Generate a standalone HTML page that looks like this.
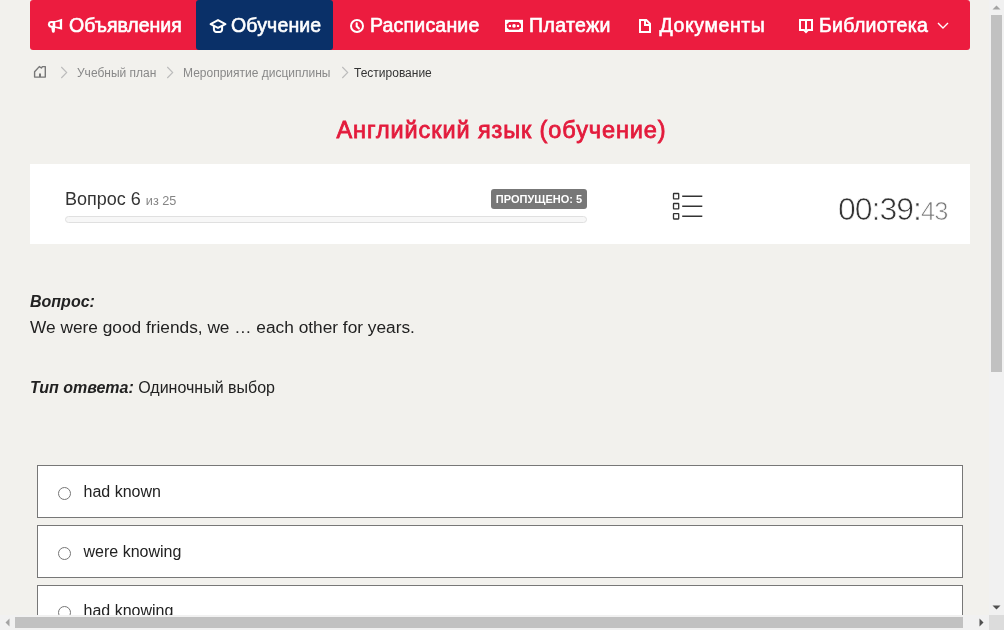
<!DOCTYPE html>
<html><head><meta charset="utf-8">
<style>
*{margin:0;padding:0;box-sizing:border-box}
body{will-change:transform}
html,body{width:1004px;height:630px;overflow:hidden;background:#f2f1ed;font-family:"Liberation Sans",sans-serif;position:relative}
.a{position:absolute;white-space:nowrap}
.nav{left:30px;top:0;width:940px;height:50px;background:#ec1c3f;border-radius:3px}
.act{left:196px;top:0;width:137px;height:50px;background:#0a3068;border-radius:3px}
.nt{font-weight:normal;font-size:19.5px;line-height:20px;color:#fff;top:15px;-webkit-text-stroke:0.6px #fff}
.ic{position:absolute}
.bc{font-size:12px;line-height:12px;top:67px;color:#888}
.title{font-weight:normal;font-size:23.5px;line-height:24px;letter-spacing:0.9px;-webkit-text-stroke:0.8px #e31b3c;color:#e31b3c;top:117.5px;left:1.5px;width:1000px;text-align:center}
.panel{left:30px;top:164px;width:940px;height:80px;background:#fff}
.opt{left:37px;width:926px;height:53px;background:#fff;border:1px solid #777}
.radio{position:absolute;left:20px;width:13px;height:13px;border:1px solid #767676;border-radius:50%;background:#fff}
.ot{position:absolute;left:45.5px;font-size:16px;line-height:16px;color:#222}
</style></head><body>
<div class="a nav"></div>
<div class="a act"></div>
<!-- megaphone -->
<svg class="ic" style="left:44px;top:14px" width="22" height="22" viewBox="0 0 22 22"><path d="M7.3 7 L11 7 L11 13.7 L7.3 13.7 A3.35 3.35 0 0 1 7.3 7 Z" fill="#fff"/><path d="M7.4 8.9 L8.7 8.9 L8.7 11.7 L7.4 11.7 A1.4 1.4 0 0 1 7.4 8.9 Z" fill="#ec1c3f"/><path d="M10.8 7.2 L18.1 4.8 L18.1 15.8 L10.8 13.7 Z" fill="#fff"/><path d="M11.3 8.2 L15.8 7.5 L15.8 13.1 L11.3 12.4 Z" fill="#ec1c3f"/><path d="M7.2 13.3 L11 13.3 L10.8 17.4 Q10.6 18.7 9.3 18.7 Q8.1 18.7 7.9 17.4 Z" fill="#fff"/></svg>
<div class="a nt" style="left:69px">Объявления</div>
<!-- grad cap -->
<svg class="ic" style="left:208px;top:17px" width="20" height="18" viewBox="0 0 20 18"><path d="M10 3.1 L17.4 7.2 L10 10.9 L2.6 7.2 Z" fill="none" stroke="#fff" stroke-width="2" stroke-linejoin="round"/><path d="M5.9 9 L5.9 12.4 Q5.9 15.1 10 15.1 Q14.1 15.1 14.1 12.4 L14.1 9" fill="none" stroke="#fff" stroke-width="2"/></svg>
<div class="a nt" style="left:231px;letter-spacing:0.15px">Обучение</div>
<!-- clock -->
<svg class="ic" style="left:349px;top:18px" width="16" height="16" viewBox="0 0 16 16"><circle cx="8" cy="8" r="6" fill="none" stroke="#fff" stroke-width="2"/><path d="M7.7 5.3 L7.7 8.3 L9.9 10.4" fill="none" stroke="#fff" stroke-width="2.1" stroke-linecap="round"/></svg>
<div class="a nt" style="left:370px;letter-spacing:0.2px">Расписание</div>
<!-- money -->
<svg class="ic" style="left:504px;top:19px" width="20" height="14" viewBox="0 0 20 14"><rect x="1" y="0.8" width="18" height="12.2" fill="#fff"/><path d="M5.1 3 L14.8 3 L17 5.2 L17 8.6 L14.8 10.8 L5.1 10.8 L2.9 8.6 L2.9 5.2 Z" fill="#ec1c3f"/><circle cx="10" cy="6.9" r="1.8" fill="#fff"/><rect x="4.8" y="5.9" width="2.2" height="2.1" fill="#fff"/><rect x="12.9" y="5.9" width="2.2" height="2.1" fill="#fff"/></svg>
<div class="a nt" style="left:529px;letter-spacing:0.4px">Платежи</div>
<!-- file -->
<svg class="ic" style="left:638px;top:18px" width="15" height="16" viewBox="0 0 15 16"><path d="M2 2 L8.3 2 L12 5.7 L12 14 L2 14 Z" fill="none" stroke="#fff" stroke-width="2" stroke-linejoin="miter"/><path d="M7 2 L7 7 L12 7" fill="none" stroke="#fff" stroke-width="2"/></svg>
<div class="a nt" style="left:659.5px;letter-spacing:0.6px">Документы</div>
<!-- book -->
<svg class="ic" style="left:798px;top:18px" width="16" height="16" viewBox="0 0 16 16"><path d="M2 2 L7 2 L8 2.8 L9 2 L14 2 L14 12 L10 12 L8 14 L6 12 L2 12 Z" fill="none" stroke="#fff" stroke-width="2" stroke-linejoin="miter"/><path d="M8 3 L8 12.5" stroke="#fff" stroke-width="2"/></svg>
<div class="a nt" style="left:819px;letter-spacing:0.3px">Библиотека</div>
<svg class="ic" style="left:936px;top:21px" width="14" height="10" viewBox="0 0 14 10"><path d="M2 2 L7 7 L12 2" fill="none" stroke="#fff" stroke-width="1.4"/></svg>

<!-- breadcrumbs -->
<svg class="ic" style="left:32px;top:64px" width="16" height="16" viewBox="0 0 16 16"><path d="M2.6 13.1 L2.6 7.8 L7.3 2.6 L9.4 4 L10.4 2.6 L13.3 2.6 L13.3 13.1 Z" fill="none" stroke="#777" stroke-width="1.4" stroke-linejoin="round"/><path d="M8 9.5 L8 13.1" stroke="#777" stroke-width="2"/></svg>
<svg class="ic" style="left:60px;top:66px" width="8" height="13" viewBox="0 0 8 13"><path d="M1.3 1 L6.7 6.5 L1.3 12" fill="none" stroke="#bbb" stroke-width="1.1"/></svg>
<div class="a bc" style="left:77px">Учебный план</div>
<svg class="ic" style="left:166px;top:66px" width="8" height="13" viewBox="0 0 8 13"><path d="M1.3 1 L6.7 6.5 L1.3 12" fill="none" stroke="#bbb" stroke-width="1.1"/></svg>
<div class="a bc" style="left:183px">Мероприятие дисциплины</div>
<svg class="ic" style="left:341px;top:66px" width="8" height="13" viewBox="0 0 8 13"><path d="M1.3 1 L6.7 6.5 L1.3 12" fill="none" stroke="#bbb" stroke-width="1.1"/></svg>
<div class="a bc" style="left:354px;color:#333">Тестирование</div>

<div class="a title">Английский язык (обучение)</div>

<div class="a panel"></div>
<div class="a" style="left:65px;top:190px;font-size:18px;line-height:18px;color:#333">Вопрос 6 <span style="font-size:12.7px;color:#858585">из 25</span></div>
<div class="a" style="left:491px;top:189px;width:96px;height:20px;background:#777;border-radius:3px;color:#fff;font-weight:bold;font-size:11px;line-height:20px;text-align:center">ПРОПУЩЕНО: 5</div>
<div class="a" style="left:65px;top:216px;width:522px;height:7px;background:#f7f7f7;border:1px solid #e0e0e0;border-radius:4px"></div>
<svg class="ic" style="left:670px;top:190px" width="36" height="32" viewBox="0 0 36 32"><g fill="none" stroke="#333" stroke-width="1.3"><rect x="3.5" y="3.5" width="5.2" height="5.3" rx="0.4"/><rect x="3.5" y="13.5" width="5.2" height="5.3" rx="0.4"/><rect x="3.5" y="23.7" width="5.2" height="5.3" rx="0.4"/><path d="M12.2 6.3 L32.3 6.3 M12.2 16.2 L32.3 16.2 M12.2 26.3 L32.3 26.3" stroke-width="1.5"/></g></svg>
<div class="a" style="left:838px;top:193px;font-size:32px;line-height:32px;letter-spacing:-1px;color:#333;-webkit-text-stroke:0.7px #fff">00:39:<span style="font-size:25.5px;color:#777">43</span></div>

<div class="a" style="left:30px;top:294px;font-size:16px;line-height:16px;font-weight:bold;font-style:italic;color:#222">Вопрос:</div>
<div class="a" style="left:30px;top:319px;font-size:17.3px;line-height:17px;color:#222">We were good friends, we … each other for years.</div>
<div class="a" style="left:30px;top:380px;font-size:16px;line-height:16px;color:#222"><b style="font-style:italic;color:#222">Тип ответа:</b> Одиночный выбор</div>

<div class="a opt" style="top:465px"><div class="radio" style="top:21px"></div><div class="ot" style="top:18px">had known</div></div>
<div class="a opt" style="top:525px"><div class="radio" style="top:21px"></div><div class="ot" style="top:18px">were knowing</div></div>
<div class="a opt" style="top:585px"><div class="radio" style="top:20px"></div><div class="ot" style="top:17px">had knowing</div></div>

<!-- scrollbars -->
<div class="a" style="left:989px;top:0;width:15px;height:615px;background:#f1f1f1"></div>
<div class="a" style="left:991px;top:15px;width:11px;height:357px;background:#c1c1c1"></div>
<svg class="ic" style="left:989px;top:0" width="15" height="15" viewBox="0 0 15 15"><path d="M3.5 9.5 L7.5 5.5 L11.5 9.5Z" fill="#a3a3a3"/></svg>
<svg class="ic" style="left:989px;top:600px" width="15" height="15" viewBox="0 0 15 15"><path d="M3.5 5.5 L7.5 9.5 L11.5 5.5Z" fill="#505050"/></svg>
<div class="a" style="left:0;top:615px;width:989px;height:15px;background:#f1f1f1"></div>
<div class="a" style="left:15px;top:617px;width:948px;height:11px;background:#c1c1c1"></div>
<svg class="ic" style="left:0;top:615px" width="15" height="15" viewBox="0 0 15 15"><path d="M9.5 3.5 L5.5 7.5 L9.5 11.5Z" fill="#a3a3a3"/></svg>
<svg class="ic" style="left:974px;top:615px" width="15" height="15" viewBox="0 0 15 15"><path d="M5.5 3.5 L9.5 7.5 L5.5 11.5Z" fill="#505050"/></svg>
<div class="a" style="left:989px;top:615px;width:15px;height:15px;background:#dcdcdc"></div>
</body></html>
